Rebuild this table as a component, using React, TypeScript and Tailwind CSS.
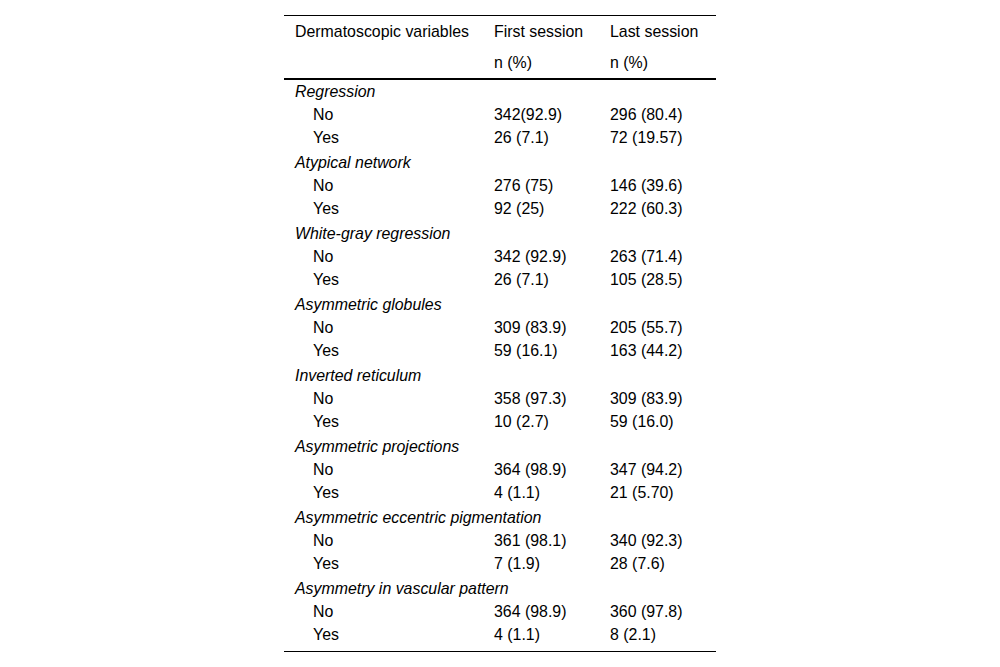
const groups = [
  { name: "Regression", no: ["342(92.9)", "296 (80.4)"], yes: ["26 (7.1)", "72 (19.57)"] },
  { name: "Atypical network", no: ["276 (75)", "146 (39.6)"], yes: ["92 (25)", "222 (60.3)"] },
  { name: "White-gray regression", no: ["342 (92.9)", "263 (71.4)"], yes: ["26 (7.1)", "105 (28.5)"] },
  { name: "Asymmetric globules", no: ["309 (83.9)", "205 (55.7)"], yes: ["59 (16.1)", "163 (44.2)"] },
  { name: "Inverted reticulum", no: ["358 (97.3)", "309 (83.9)"], yes: ["10 (2.7)", "59 (16.0)"] },
  { name: "Asymmetric projections", no: ["364 (98.9)", "347 (94.2)"], yes: ["4 (1.1)", "21 (5.70)"] },
  { name: "Asymmetric eccentric pigmentation", no: ["361 (98.1)", "340 (92.3)"], yes: ["7 (1.9)", "28 (7.6)"] },
  { name: "Asymmetry in vascular pattern", no: ["364 (98.9)", "360 (97.8)"], yes: ["4 (1.1)", "8 (2.1)"] },
];

function DataRow({ label, values }: { label: string; values: string[] }) {
  return (
    <div className="grid grid-cols-[199px_116px_117px] h-[23px] leading-[23px]">
      <div className="pl-[29px]">{label}</div>
      <div className="pl-[11px]">{values[0]}</div>
      <div className="pl-[11px]">{values[1]}</div>
    </div>
  );
}

export default function App() {
  return (
    <div className="min-h-[667px] bg-white flex justify-center pt-[15px] font-['Liberation_Sans',Arial,sans-serif] text-[15.9px] text-black">
      <div className="w-[432px]">
        <div className="border-t border-black border-b-2">
          <div className="grid grid-cols-[199px_116px_117px] h-[31px] leading-[31px]">
            <div className="pl-[11px]">Dermatoscopic variables</div>
            <div className="pl-[11px]">First session</div>
            <div className="pl-[11px]">Last session</div>
          </div>
          <div className="grid grid-cols-[199px_116px_117px] h-[31px] leading-[31px]">
            <div />
            <div className="pl-[11px]">n (%)</div>
            <div className="pl-[11px]">n (%)</div>
          </div>
        </div>
        <div className="border-b border-black pb-[5px] flex flex-col gap-[2px]">
          {groups.map((g) => (
            <div key={g.name}>
              <div className="h-[23px] leading-[23px] pl-[11px] italic">{g.name}</div>
              <DataRow label="No" values={g.no} />
              <DataRow label="Yes" values={g.yes} />
            </div>
          ))}
        </div>
      </div>
    </div>
  );
}
